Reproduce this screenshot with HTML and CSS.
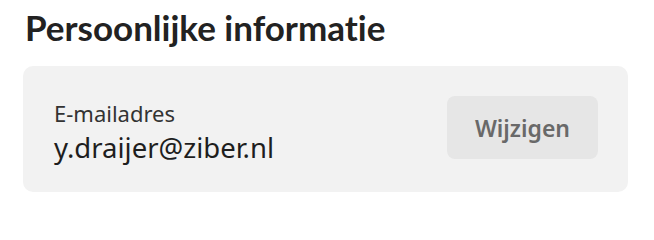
FILE: index.html
```html
<!DOCTYPE html>
<html lang="nl">
<head>
<meta charset="utf-8">
<link rel="stylesheet" href="styles.css">
</head>
<body>
<section class="section">
  <h2 class="title">Persoonlijke informatie</h2>
  <div class="card">
    <div class="field">
      <div class="label">E-mailadres</div>
      <div class="value">y.draijer@ziber.nl</div>
    </div>
    <button class="btn">Wijzigen</button>
  </div>
</section>
</body>
</html>
```
FILE: styles.css
```css
html, body {
  margin: 0;
  padding: 0;
  background: #ffffff;
}
.section {
  padding: 4px 26px 0 23px;
  font-family: "Noto Sans", "Open Sans", sans-serif;
}
.title {
  margin: 0 0 0 2px;
  font-family: Lato, "Noto Sans", sans-serif;
  font-weight: 700;
  font-size: 35px;
  line-height: 46px;
  color: #222222;
  font-variant-ligatures: none;
}
.card {
  margin-top: 16px;
  height: 126px;
  box-sizing: border-box;
  background: #f2f2f2;
  border-radius: 10px;
  padding: 0 30px 0 31px;
  display: flex;
  align-items: center;
  justify-content: space-between;
}
.field {
  display: flex;
  flex-direction: column;
  margin-top: 6px;
}
.label {
  font-size: 22px;
  line-height: 31px;
  color: #333333;
}
.value {
  font-size: 27.5px;
  line-height: 38px;
  color: #1e1e1e;
}
.btn {
  width: 151px;
  height: 63px;
  border: none;
  border-radius: 8px;
  background: #e6e6e6;
  color: #696969;
  font-family: "Noto Sans", sans-serif;
  font-weight: 600;
  font-size: 23px;
  padding: 0;
  margin-top: -3px;
}
```
